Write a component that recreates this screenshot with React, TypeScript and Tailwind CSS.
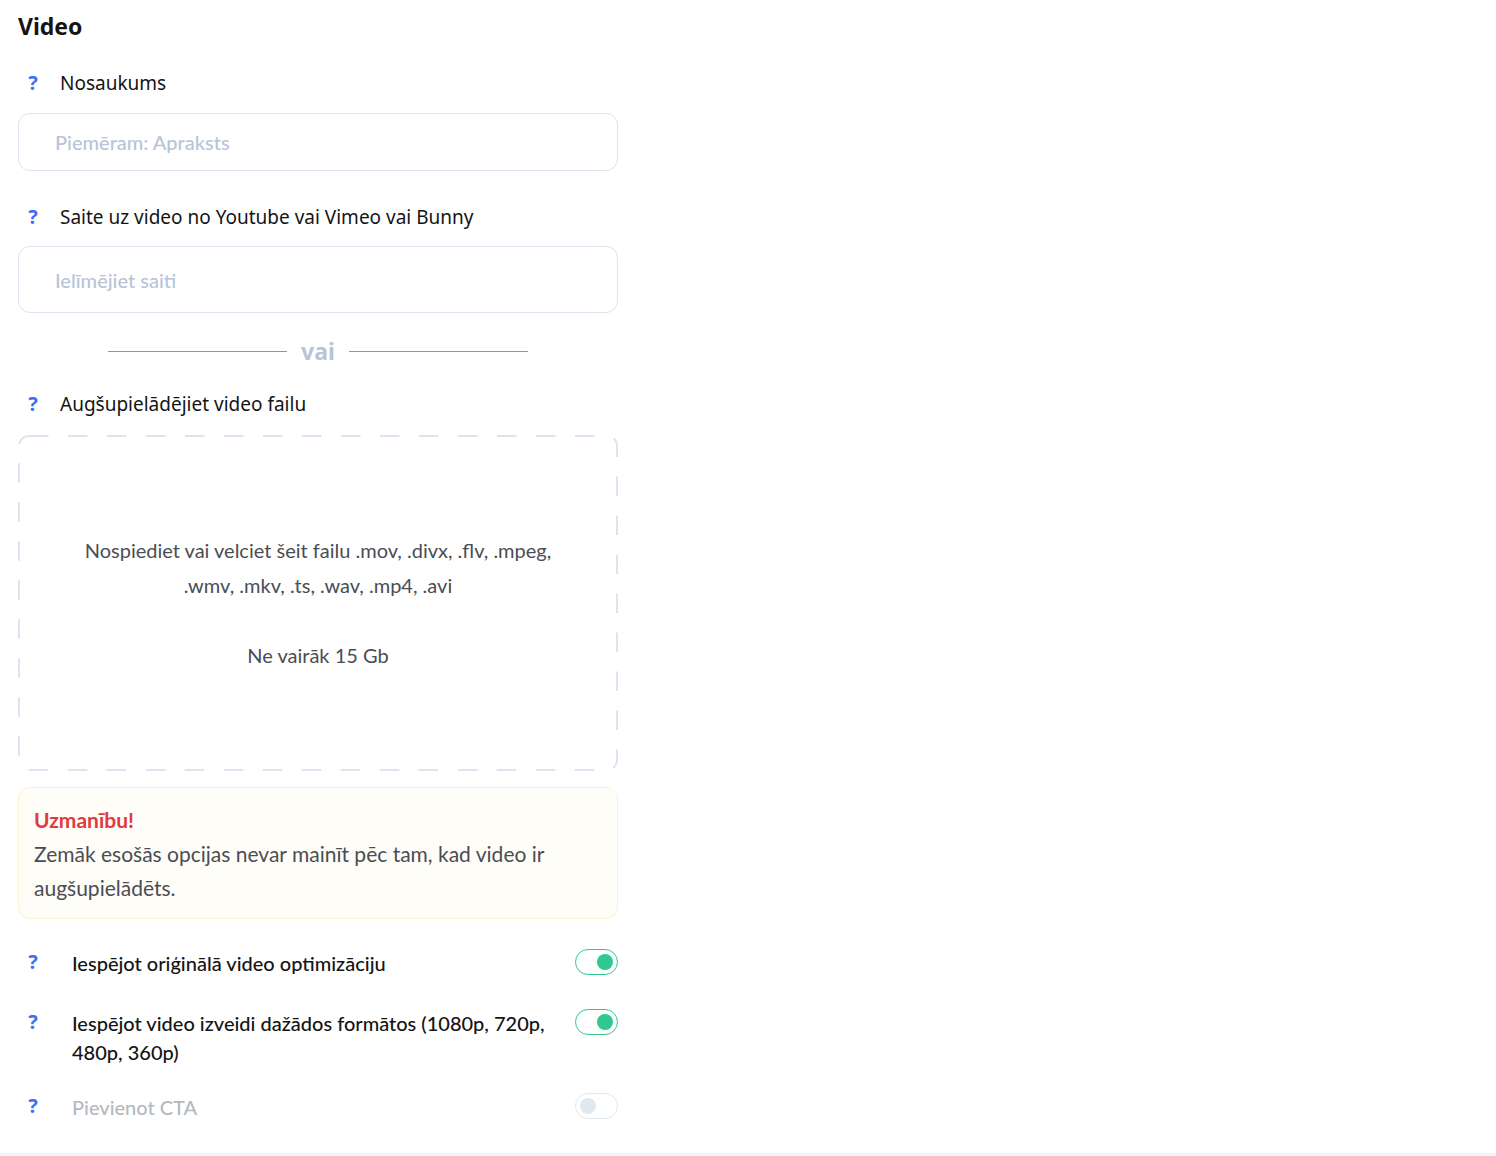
const headingFont = "font-['Noto_Sans',sans-serif]"

function Help() {
  return <span className="w-[30px] shrink-0 text-center font-['Noto_Sans',sans-serif] text-[20px] leading-[26px] font-bold text-[#3b6ff5]">?</span>
}

function FieldLabel({ text, className }: { text: string; className: string }) {
  return (
    <div className={`flex items-center pl-[18px] ${className}`}>
      <Help />
      <span className={`ml-[12px] ${headingFont} text-[19px] leading-[26px] text-[#141414]`}>{text}</span>
    </div>
  )
}

function Toggle({ on, disabled }: { on?: boolean; disabled?: boolean }) {
  return (
    <button
      disabled={disabled}
      className={`flex h-[26px] w-[43px] shrink-0 items-center rounded-full border bg-white px-[4px] ${on ? 'justify-end border-[#2fc98f]' : 'justify-start border-[#e2e8f0]'}`}
    >
      <span className={`h-[16px] w-[16px] rounded-full ${on ? 'bg-[#2fc98f]' : 'bg-[#e2e8f0]'}`} />
    </button>
  )
}

function ToggleRow({ text, on, disabled, className }: { text: string; on?: boolean; disabled?: boolean; className: string }) {
  return (
    <div className={`flex items-start justify-between ${className}`}>
      <div className="flex items-start">
        <Help />
        <span className={`ml-[24px] w-[480px] font-['Lato',sans-serif] text-[20px] leading-[29px] font-medium ${disabled ? 'text-[#b4b8bf]' : 'text-[#141414]'}`}>{text}</span>
      </div>
      <Toggle on={on} disabled={disabled} />
    </div>
  )
}

export default function App() {
  return (
    <div className="h-[1156px] overflow-hidden bg-white font-['Lato',sans-serif]">
      <div className="h-[1153px] w-[636px]">
        <h2 className={`pt-[11px] pl-[18px] ${headingFont} text-[23px] leading-[30px] font-bold text-[#141414]`}>Video</h2>

        <FieldLabel text="Nosaukums" className="mt-[29px]" />
        <div className="mt-[17px] pl-[18px]">
          <input
            placeholder="Piemēram: Apraksts"
            className="h-[58px] w-[600px] rounded-[12px] border border-[#e1e1ef] pl-[36px] text-[20px] font-medium outline-none placeholder:text-[#b8c4d9]"
          />
        </div>

        <FieldLabel text="Saite uz video no Youtube vai Vimeo vai Bunny" className="mt-[33px]" />
        <div className="mt-[16px] pl-[18px]">
          <input
            placeholder="Ielīmējiet saiti"
            className="h-[67px] w-[600px] rounded-[12px] border border-[#e1e1ef] pl-[36px] text-[20px] font-medium outline-none placeholder:text-[#b8c4d9]"
          />
        </div>

        {/* divider */}
        <div className="mt-[20px] ml-[108px] flex h-[36px] w-[420px] items-center">
          <div className="h-px flex-1 bg-[#6f97f7]" />
          <span className={`w-[62px] text-center ${headingFont} text-[23px] leading-[36px] font-bold text-[#b8c4d9]`}>vai</span>
          <div className="h-px flex-1 bg-[#6f97f7]" />
        </div>

        <FieldLabel text="Augšupielādējiet video failu" className="mt-[22px]" />

        {/* dropzone */}
        <div className="relative mt-[18px] ml-[18px] flex h-[336px] w-[600px] flex-col items-center justify-center text-center text-[20px] leading-[35px] text-[#4a4d55]">
          <svg className="absolute inset-0 h-full w-full" fill="none">
            <rect x="1" y="1" width="598" height="334" rx="10" stroke="#e1e1ef" strokeWidth="2" strokeDasharray="19.5 19.5" />
          </svg>
          <p className="w-[480px]">Nospiediet vai velciet šeit failu .mov, .divx, .flv, .mpeg, .wmv, .mkv, .ts, .wav, .mp4, .avi</p>
          <p className="mt-[35px]">Ne vairāk 15 Gb</p>
        </div>

        {/* warning */}
        <div className="mt-[16px] ml-[18px] h-[132px] w-[600px] rounded-[12px] border border-[#fbf2d3] bg-[#fffdf7] px-[15px] pt-[15px] text-[21px] leading-[34px] text-[#4a4d55]">
          <div className="font-bold text-[#e03a3e]">Uzmanību!</div>
          <div>Zemāk esošās opcijas nevar mainīt pēc tam, kad video ir augšupielādēts.</div>
        </div>

        <div className="mt-[30px] ml-[18px] w-[600px]">
          <ToggleRow text="Iespējot oriģinālā video optimizāciju" on className="h-[60px]" />
          <ToggleRow text="Iespējot video izveidi dažādos formātos (1080p, 720p, 480p, 360p)" on className="h-[84px]" />
          <ToggleRow text="Pievienot CTA" disabled className="h-[30px]" />
        </div>
      </div>
      <div className="h-[3px] bg-[#f1f4f8]" />
    </div>
  )
}
